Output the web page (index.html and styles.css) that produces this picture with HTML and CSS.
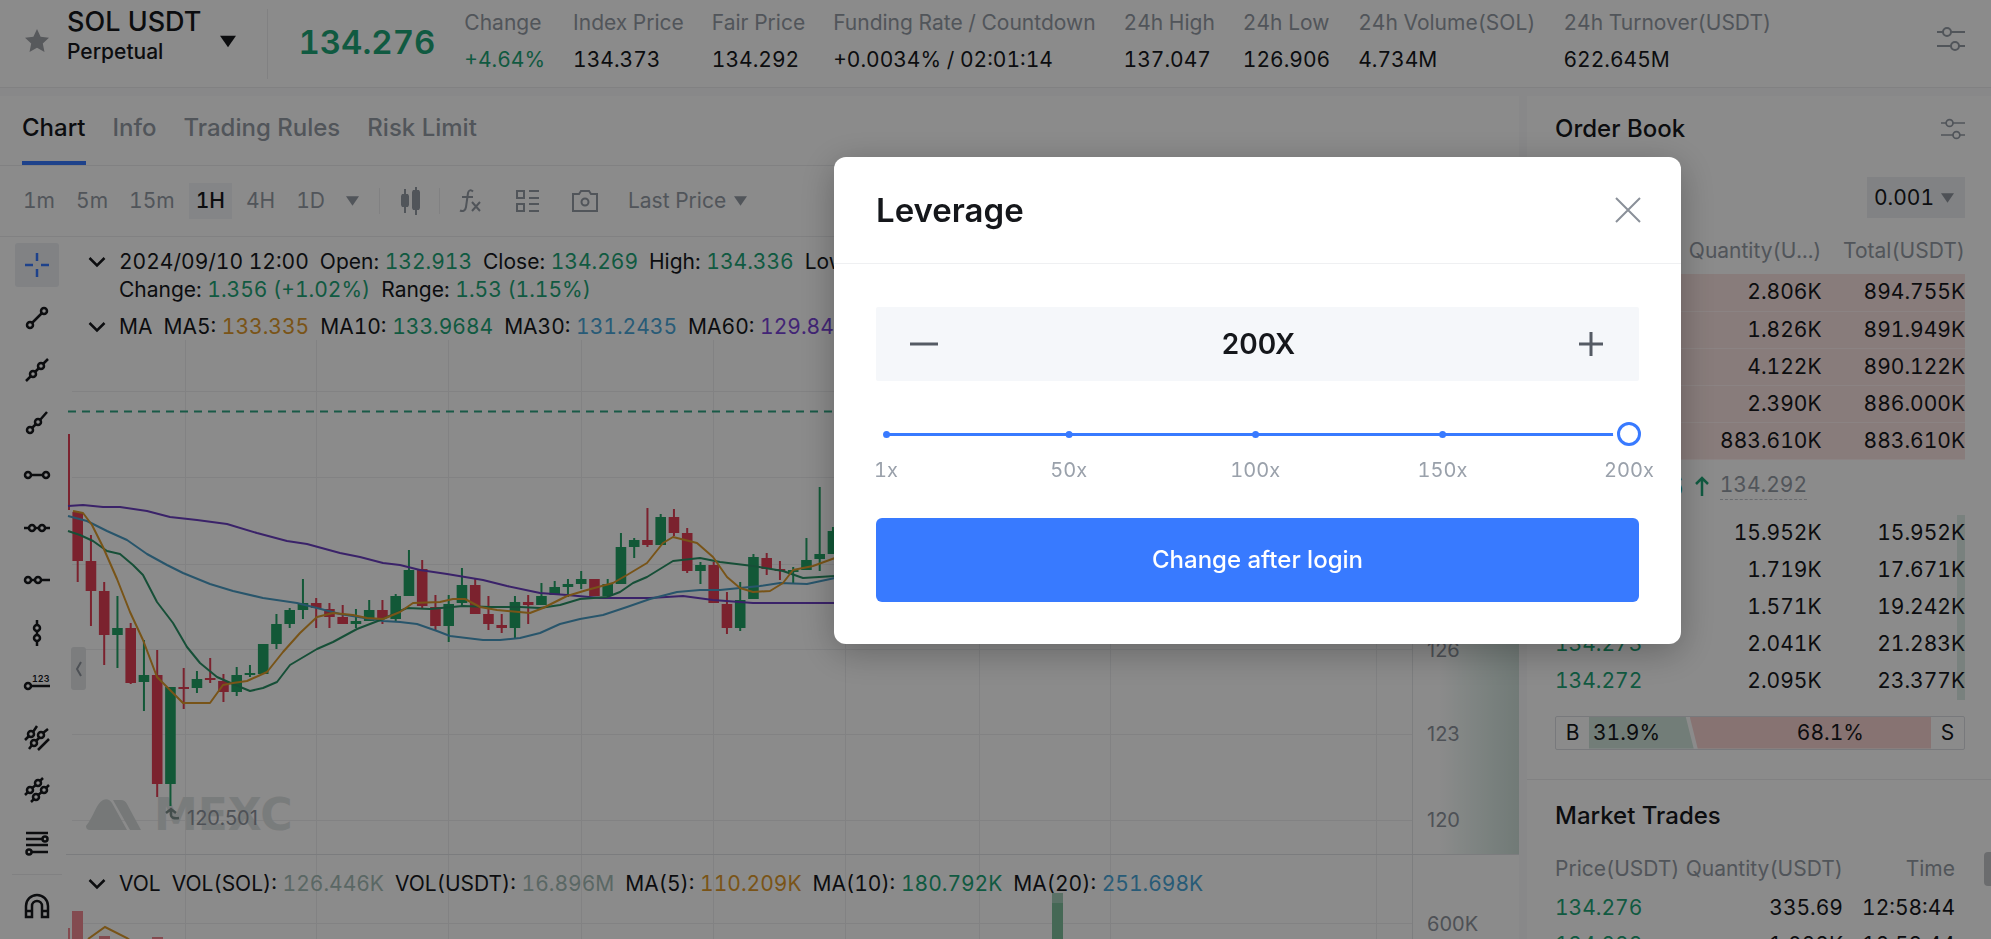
FILE: index.html
```html
<!DOCTYPE html>
<html lang="en">
<head>
<meta charset="utf-8">
<title>SOL USDT Perpetual</title>
<link rel="stylesheet" href="styles.css">
</head>
<body>
<svg class="defs" aria-hidden="true">
  <symbol id="i-filter" viewBox="0 0 28 28"><g fill="none" stroke="currentColor" stroke-width="2"><circle cx="10" cy="7" r="4"/><path d="M0 7h6M14 7h14"/><circle cx="18" cy="21" r="4"/><path d="M0 21h14M22 21h6"/></g></symbol>
  <symbol id="i-chev" viewBox="0 0 18 12"><path d="M1.500 2l7.500 7.500L16.500 2" fill="none" stroke="currentColor" stroke-width="2.500"/></symbol>
  <symbol id="i-caret" viewBox="0 0 14 10"><path d="M0 0h14L7 10z" fill="currentColor"/></symbol>
</svg>

<header class="ticker">
  <svg class="star" viewBox="0 0 24 24" aria-hidden="true"><path d="M12 0l3.600 7.700 8.400 1-6.200 5.800 1.700 8.500-7.500-4.200L4.500 23l1.700-8.500L0 8.700l8.400-1z" fill="currentColor"/></svg>
  <button class="pair">
    <span class="pair-text"><span class="pair-name">SOL USDT</span><span class="pair-kind">Perpetual</span></span>
    <svg class="pair-caret"><use href="#i-caret"/></svg>
  </button>
  <strong class="last-price">134.276</strong>
  <dl class="stats">
    <div><dt>Change</dt><dd class="up">+4.64%</dd></div>
    <div><dt>Index Price</dt><dd>134.373</dd></div>
    <div><dt>Fair Price</dt><dd>134.292</dd></div>
    <div><dt>Funding Rate / Countdown</dt><dd>+0.0034% / 02:01:14</dd></div>
    <div><dt>24h High</dt><dd>137.047</dd></div>
    <div><dt>24h Low</dt><dd>126.906</dd></div>
    <div><dt>24h Volume(SOL)</dt><dd>4.734M</dd></div>
    <div><dt>24h Turnover(USDT)</dt><dd>622.645M</dd></div>
  </dl>
  <button class="icon-btn ticker-settings" aria-label="Ticker settings"><svg width="28" height="28"><use href="#i-filter"/></svg></button>
</header>

<main class="workspace">
  <section class="chart-panel">
    <nav class="tabs">
      <a class="tab active" href="#chart">Chart</a>
      <a class="tab" href="#info">Info</a>
      <a class="tab" href="#rules">Trading Rules</a>
      <a class="tab" href="#risk">Risk Limit</a>
    </nav>
    <div class="toolbar">
      <div class="frames">
        <button>1m</button><button>5m</button><button>15m</button><button class="active">1H</button><button>4H</button><button>1D</button>
        <button class="more" aria-label="More intervals"><svg class="caret"><use href="#i-caret"/></svg></button>
      </div>
      <button class="tool sep" aria-label="Chart type"><svg width="24" height="28" viewBox="0 0 24 28" fill="currentColor"><path d="M5 2h2v5h2l1 2v9l-1 2H7v6H5v-6H3l-1-2V9l1-2h2zM16 0h2v3h2l1 2v16l-1 2h-2v5h-2v-5h-2l-1-2V5l1-2h2z"/></svg></button>
      <button class="tool sep" aria-label="Indicators"><svg width="24" height="26" viewBox="0 0 24 26" fill="none" stroke="currentColor" stroke-width="2"><path d="M14 3.500C12 1.500 9.500 2 9 5L7 19c-.5 3.500-3 5-6 3.500M3 9h11M13 14l8 9M21 14l-8 9"/></svg></button>
      <button class="tool" aria-label="Layout"><svg width="24" height="24" viewBox="0 0 24 24" fill="none" stroke="currentColor" stroke-width="2"><path d="M2 2h7v7H2zM2 15h7v7H2zM14 2h10M14 9h10M14 15h10M14 22h10"/></svg></button>
      <button class="tool" aria-label="Screenshot"><svg width="28" height="24" viewBox="0 0 28 24" fill="none" stroke="currentColor" stroke-width="2"><path d="M2 5h6l2-3h8l2 3h6v17H2z"/><circle cx="14" cy="13" r="3.500"/></svg></button>
      <button class="price-kind">Last Price <svg class="caret"><use href="#i-caret"/></svg></button>
    </div>
    <div class="chart-body">
      <div class="draw-tools">
        <div class="draw-list">
          <button class="active" aria-label="Crosshair"><svg viewBox="0 0 28 28"><path d="M14 2v8M14 18v8M2 14h8M18 14h8"/></svg></button>
          <button aria-label="Segment"><svg viewBox="0 0 28 28"><path d="M9 19L19 9"/><circle cx="7" cy="21" r="3"/><circle cx="21" cy="7" r="3"/></svg></button>
          <button aria-label="Line"><svg viewBox="0 0 28 28"><path d="M3 25l5-5M12 16l4-4M20 8l5-5"/><circle cx="10" cy="18" r="3"/><circle cx="18" cy="10" r="3"/></svg></button>
          <button aria-label="Ray"><svg viewBox="0 0 28 28"><path d="M9 19l4-4M17 11l7-8"/><circle cx="7" cy="21" r="3"/><circle cx="15" cy="13" r="3"/></svg></button>
          <button aria-label="Horizontal segment"><svg viewBox="0 0 28 28"><path d="M8 14h12"/><circle cx="5" cy="14" r="3"/><circle cx="23" cy="14" r="3"/></svg></button>
          <button aria-label="Horizontal line"><svg viewBox="0 0 28 28"><path d="M1 14h5M12 14h4M22 14h5"/><circle cx="9" cy="14" r="3"/><circle cx="19" cy="14" r="3"/></svg></button>
          <button aria-label="Horizontal ray"><svg viewBox="0 0 28 28"><path d="M8 14h4M18 14h9"/><circle cx="5" cy="14" r="3"/><circle cx="15" cy="14" r="3"/></svg></button>
          <button aria-label="Vertical line"><svg viewBox="0 0 28 28"><path d="M14 1v5M14 12v4M14 22v5"/><circle cx="14" cy="9" r="3"/><circle cx="14" cy="19" r="3"/></svg></button>
          <button aria-label="Price line"><svg viewBox="0 0 28 28"><path d="M8 15h19"/><circle cx="5" cy="15" r="3"/><text x="9" y="11">123</text></svg></button>
          <button aria-label="Parallel lines"><svg viewBox="0 0 28 28"><path d="M2 16l4-4M10 8l4-6M6 25l3-4M13 17l4-4M20 9l5-4M15 26l11-11"/><circle cx="8" cy="10" r="3"/><circle cx="18" cy="11" r="3"/><circle cx="11" cy="19" r="3"/></svg></button>
          <button aria-label="Channel"><svg viewBox="0 0 28 28"><path d="M2 19l3-3M9 12l4-3M17 5l3-3M8 26l3-3M15 19l4-3M23 12l3-3"/><circle cx="7" cy="14" r="3"/><circle cx="15" cy="7" r="3"/><circle cx="13" cy="21" r="3"/><circle cx="21" cy="14" r="3"/></svg></button>
          <button aria-label="Levels"><svg viewBox="0 0 28 28"><path d="M3 4h22M3 10h16M3 16h22M9 23h16"/><circle cx="22" cy="10" r="2.500"/><circle cx="6" cy="23" r="2.500"/></svg></button>
        </div>
        <button class="magnet" aria-label="Magnet"><svg viewBox="0 0 28 28"><path d="M3 25V14a11 11 0 0 1 22 0v11h-6V14a5 5 0 0 0-10 0v11zM3 19h6M19 19h6"/></svg></button>
      </div>
      <div class="plot">
        <svg class="plot-svg" id="plot" viewBox="66 237 1453 702" preserveAspectRatio="xMinYMin slice" role="img" aria-label="SOL USDT one hour candles"></svg>
        <div class="legend">
          <div class="legend-row">
            <svg class="chev"><use href="#i-chev"/></svg>
            <p><span>2024/09/10 12:00</span> <span>Open: <b class="up">132.913</b></span> <span>Close: <b class="up">134.269</b></span> <span>High: <b class="up">134.336</b></span> <span>Low: <b class="up">132.806</b></span></p>
            <p class="second"><span>Change: <b class="up">1.356 (+1.02%)</b></span> <span>Range: <b class="up">1.53 (1.15%)</b></span></p>
          </div>
          <div class="legend-row">
            <svg class="chev"><use href="#i-chev"/></svg>
            <p><span>MA</span> <span>MA5: <b class="c-orange">133.335</b></span> <span>MA10: <b class="up">133.9684</b></span> <span>MA30: <b class="c-blue">131.2435</b></span> <span>MA60: <b class="c-purple">129.8423</b></span></p>
          </div>
        </div>
        <div class="legend vol">
          <div class="legend-row">
            <svg class="chev"><use href="#i-chev"/></svg>
            <p><span>VOL</span> <span>VOL(SOL): <b class="c-mist">126.446K</b></span> <span>VOL(USDT): <b class="c-mist">16.896M</b></span> <span>MA(5): <b class="c-orange">110.209K</b></span> <span>MA(10): <b class="up">180.792K</b></span> <span>MA(20): <b class="c-blue">251.698K</b></span></p>
          </div>
        </div>
        <button class="collapse" aria-label="Hide drawing tools"><svg width="8" height="16" viewBox="0 0 8 16"><path d="M6 1L2 8l4 7" fill="none" stroke="currentColor" stroke-width="2"/></svg></button>
      </div>
    </div>
  </section>

  <aside class="side">
    <section class="book">
      <div class="side-head"><h2>Order Book</h2><button class="icon-btn" aria-label="Order book settings"><svg width="24" height="24"><use href="#i-filter"/></svg></button></div>
      <div class="precision"><label class="select-wrap"><select aria-label="Price precision"><option>0.001</option></select><svg class="caret"><use href="#i-caret"/></svg></label></div>
      <table class="orders">
        <thead><tr><th>Price</th><th>Quantity(U...)</th><th>Total(USDT)</th></tr></thead>
        <tbody class="asks">
          <tr><td>134.281</td><td>2.806K</td><td>894.755K</td></tr>
          <tr><td>134.280</td><td>1.826K</td><td>891.949K</td></tr>
          <tr><td>134.279</td><td>4.122K</td><td>890.122K</td></tr>
          <tr><td>134.278</td><td>2.390K</td><td>886.000K</td></tr>
          <tr><td>134.277</td><td>883.610K</td><td>883.610K</td></tr>
        </tbody>
      </table>
      <div class="mid"><strong>134.276</strong><svg width="14" height="20" viewBox="0 0 14 20"><path d="M7 20V2M1 8l6-6 6 6" fill="none" stroke="currentColor" stroke-width="2.500"/></svg><a href="#fair">134.292</a></div>
      <table class="orders">
        <tbody class="bids">
          <tr><td>134.276</td><td>15.952K</td><td>15.952K</td></tr>
          <tr><td>134.275</td><td>1.719K</td><td>17.671K</td></tr>
          <tr><td>134.274</td><td>1.571K</td><td>19.242K</td></tr>
          <tr><td>134.273</td><td>2.041K</td><td>21.283K</td></tr>
          <tr><td>134.272</td><td>2.095K</td><td>23.377K</td></tr>
        </tbody>
      </table>
      <div class="ratio"><span class="tag">B</span><span class="buy">31.9%</span><span class="sell">68.1%</span><span class="tag">S</span></div>
    </section>
    <section class="trades">
      <h2>Market Trades</h2>
      <table>
        <thead><tr><th>Price(USDT)</th><th>Quantity(USDT)</th><th>Time</th></tr></thead>
        <tbody>
          <tr><td>134.276</td><td>335.69</td><td>12:58:44</td></tr>
          <tr><td>134.288</td><td>1.028K</td><td>12:58:44</td></tr>
        </tbody>
      </table>
      <div class="scroll-thumb"></div>
    </section>
  </aside>
</main>

<div class="overlay">
  <section class="dialog" role="dialog" aria-modal="true" aria-labelledby="dlg-title">
    <header class="dialog-head">
      <h1 id="dlg-title">Leverage</h1>
      <button class="close" aria-label="Close"><svg width="26" height="26" viewBox="0 0 26 26"><path d="M1 1l24 24M25 1L1 25" stroke="currentColor" stroke-width="2"/></svg></button>
    </header>
    <div class="dialog-body">
      <div class="stepper">
        <button aria-label="Decrease"><svg width="28" height="28" viewBox="0 0 28 28"><path d="M0 14h28" stroke="currentColor" stroke-width="3"/></svg></button>
        <input type="text" value="200X" aria-label="Leverage value">
        <button aria-label="Increase"><svg width="24" height="24" viewBox="0 0 24 24"><path d="M0 12h24M12 0v24" stroke="currentColor" stroke-width="3"/></svg></button>
      </div>
      <div class="slider">
        <input type="range" min="1" max="200" value="200" aria-label="Leverage">
        <div class="ticks">
          <span style="left:0%">1x</span>
          <span style="left:24.600%">50x</span>
          <span style="left:49.700%">100x</span>
          <span style="left:74.900%">150x</span>
          <span class="end" style="left:100%">200x</span>
        </div>
      </div>
      <button class="primary">Change after login</button>
    </div>
  </section>
</div>
<script src="chart.js"></script>
</body>
</html>
```

FILE: styles.css
```css
:root {
  --ink: #16181c;
  --muted: #959ca6;
  --line: #ecedef;
  --up: #1fa577;
  --blue: #387aff;
}
* { box-sizing: border-box; }
body {
  margin: 0;
  height: 100vh;
  display: flex;
  flex-direction: column;
  overflow: hidden;
  background: #fff;
  color: var(--ink);
  font: 21px/28px Inter, "Liberation Sans", sans-serif;
  font-variant-numeric: tabular-nums;
}
button, input, select { font: inherit; color: inherit; font-variant-numeric: inherit; }
button { border: 0; padding: 0; background: none; display: flex; align-items: center; }
a { color: inherit; text-decoration: none; }
h1, h2, p, dl, dd { margin: 0; }
b { font-weight: 400; }
svg { display: block; flex: none; }
.defs { position: absolute; width: 0; height: 0; }
.up { color: var(--up); }
.c-orange { color: #e09a2c; }
.c-blue { color: #4aa8da; }
.c-purple { color: #7a45d8; }
.c-mist { color: #a6bdb8; }
.caret { width: 13px; height: 10px; }
.icon-btn { color: var(--muted); }

.ticker {
  flex: none;
  display: flex;
  align-items: center;
  height: 88px;
  padding: 0 26px 0 25px;
  border-bottom: 1px solid var(--line);
}
.star { width: 24px; height: 24px; margin: 0 18px 6px 0; color: #a0a3a9; }
.pair { gap: 19px; padding-right: 31px; height: 70px; border-right: 1px solid var(--line); text-align: left; font-weight: 500; }
.pair-text { display: flex; flex-direction: column; margin-bottom: 16px; }
.pair-name { font-size: 27px; line-height: 32px; }
.pair-caret { width: 16px; height: 13px; margin-bottom: 4px; }
.last-price { margin: 0 29px 0 30px; padding-bottom: 3px; font-size: 33px; font-weight: 600; color: var(--up); }
.stats { display: flex; gap: 28px; flex: 1; padding-bottom: 6px; white-space: nowrap; }
.stats dt { color: var(--muted); line-height: 37px; }
.stats dd { line-height: 37px; }
.ticker-settings { margin-bottom: 10px; }

.workspace { flex: 1; min-height: 0; display: grid; grid-template-columns: minmax(0, 1fr) 464px; gap: 8px; padding-top: 8px; background: #fafafb; }
.chart-panel, .side { background: #fff; min-height: 0; overflow: hidden; }
.chart-panel { display: flex; flex-direction: column; }

.tabs { display: flex; flex: none; gap: 27px; height: 70px; padding: 0 22px; border-bottom: 1px solid var(--line); font-size: 24px; font-weight: 500; color: var(--muted); }
.tab { display: flex; align-items: center; padding-bottom: 2px; border-bottom: 4px solid transparent; }
.tab.active { color: var(--ink); border-color: var(--blue); }

.toolbar { display: flex; flex: none; align-items: center; height: 71px; padding-left: 16px; border-bottom: 1px solid var(--line); color: var(--muted); }
.frames { display: flex; gap: 7px; }
.frames button { padding: 4px 7px; }
.frames .active { background: #f3f5f7; color: var(--ink); font-weight: 500; }
.frames .more { padding: 4px 20px 4px 7px; }
.tool { justify-content: center; padding: 0 16px; height: 26px; }
.tool.sep { padding-left: 19px; border-left: 1px solid var(--line); }
.price-kind { gap: 8px; padding-left: 13px; }

.chart-body { flex: 1; min-height: 0; display: flex; }
.draw-tools { flex: none; width: 66px; padding: 6px 4px 0 12px; }
.draw-list { display: flex; flex-direction: column; align-items: center; justify-content: space-between; height: 632px; padding-bottom: 9px; border-bottom: 1px solid var(--line); }
.draw-tools button { flex: none; justify-content: center; width: 44px; height: 44px; border-radius: 3px; }
.draw-tools .active { background: #eceff3; color: var(--blue); }
.draw-tools svg { width: 28px; height: 28px; fill: none; stroke: currentColor; stroke-width: 2.500; }
.draw-tools text { fill: currentColor; stroke: none; font-size: 9px; font-weight: 600; }
.draw-tools .magnet { margin: 9px auto 0; }

.plot { position: relative; flex: 1; min-width: 0; overflow: hidden; }
.plot-svg { width: 100%; height: 100%; font-variant-numeric: normal; }
.plot-svg text { fill: #8f959e; font-size: 20px; }
.plot-svg .brand { fill: #dfe3e3; font: bold 44px "DejaVu Sans", sans-serif; }
.legend { position: absolute; top: 11px; left: 22px; display: grid; gap: 9px; white-space: nowrap; }
.legend.vol { top: 633px; }
.legend-row { display: grid; grid-template-columns: 18px auto; column-gap: 13px; align-items: center; }
.legend p { display: flex; gap: 11px; }
.legend .second { grid-column: 2; }
.chev { width: 18px; height: 12px; }
.collapse { position: absolute; top: 410px; left: 5px; width: 15px; height: 43px; justify-content: center; background: #e3e6e8; border-radius: 3px; color: #8f959e; }

.side { display: flex; flex-direction: column; }
.book { flex: none; padding: 0 26px 29px 28px; border-bottom: 1px solid var(--line); }
h2 { font-size: 24px; font-weight: 500; }
.side-head { display: flex; align-items: center; justify-content: space-between; height: 66px; }
.precision { display: flex; justify-content: flex-end; padding-top: 15px; }
.select-wrap { display: flex; align-items: center; justify-content: space-between; width: 98px; height: 41px; padding: 0 11px 0 7px; background: #eceff2; }
.select-wrap select { appearance: none; width: 66px; border: 0; padding: 0; background: none; }
.select-wrap .caret { color: #8f959e; }
table { width: 100%; border-collapse: collapse; table-layout: fixed; }
th { font-weight: 400; color: var(--muted); }
th, td { padding: 0; height: 37px; text-align: right; white-space: nowrap; }
th:first-child, td:first-child { text-align: left; }
.orders th { height: 56px; padding-top: 10px; }
.orders th:nth-child(n+2), .orders td:nth-child(n+2) { width: 35%; }
.asks tr { background: #fae4e2; border-bottom: 1px solid #fff1f0; }
.asks td:first-child { color: #e2465a; }
.bids td:first-child, .trades td:first-child { color: var(--up); }
.bids tr { background: linear-gradient(to left, #dfece8 8px, transparent 8px); }
.mid { display: flex; align-items: center; gap: 11px; height: 55px; padding-bottom: 3px; color: var(--up); }
.mid strong { font-size: 31px; font-weight: 600; }
.mid a { color: var(--muted); border-bottom: 1px dashed #c3c7ce; }
.ratio { display: flex; height: 34px; margin-top: 16px; border: 1px solid #dcdfe3; border-radius: 2px; line-height: 32px; }
.ratio .tag { width: 33px; text-align: center; }
.ratio .buy { flex: 32; padding-left: 4px; background: #d2e6dd; clip-path: polygon(0 0, calc(100% - 8px) 0, 100% 100%, 0 100%); }
.ratio .sell { flex: 64; margin-left: -4px; text-align: center; padding-left: 40px; background: #f8d3d1; clip-path: polygon(0 0, 100% 0, 100% 100%, 8px 100%); }
.trades { position: relative; flex: 1; padding: 22px 36px 0 28px; }
.trades th { height: 60px; padding-top: 18px; }
.trades h2 { line-height: 28px; }
.trades th:nth-child(2), .trades td:nth-child(2) { width: 41%; }
.trades th:nth-child(3), .trades td:nth-child(3) { width: 28%; }
.scroll-thumb { position: absolute; right: 0; top: 72px; width: 7px; height: 34px; border-radius: 4px 0 0 4px; background: #c5c7ca; }

.overlay { position: fixed; inset: 0; display: flex; align-items: flex-start; justify-content: flex-end; padding: 157px 310px 0 0; background: rgba(0, 0, 0, .455); }
.dialog { width: 847px; background: #fff; border-radius: 12px; box-shadow: 0 8px 36px rgba(0, 0, 0, .28); color: #15171b; }
.dialog-head { display: flex; align-items: center; justify-content: space-between; height: 107px; padding: 0 40px 0 42px; border-bottom: 1px solid #eff0f2; }
h1 { font-size: 33px; line-height: 40px; font-weight: 600; }
.close { color: #8a9099; }
.dialog-body { padding: 43px 42px 42px; }
.stepper { display: flex; align-items: center; justify-content: space-between; height: 74px; padding: 0 36px 0 34px; background: #f5f7fa; border-radius: 2px; color: #555b64; }
.stepper input { flex: 1; min-width: 0; border: 0; background: none; text-align: center; font-size: 28px; font-weight: 600; color: #15171b; font-variant-numeric: normal; }
.slider { position: relative; margin: 41px 10px 22px; }
.slider input { appearance: none; display: block; width: calc(100% + 24px); height: 24px; margin: 0 -12px; background: none; }
.slider input::-webkit-slider-runnable-track { height: 3px; margin: 0 12px; background: var(--blue); }
.slider input::-webkit-slider-thumb { appearance: none; width: 24px; height: 24px; margin-top: -11px; border: 3px solid var(--blue); border-radius: 50%; background: #fff; box-shadow: 0 0 0 4px #fff; transform: translateX(12px); }
.ticks { position: relative; height: 40px; margin-top: 10px; color: #9aa1ab; line-height: 28px; font-size: 20px; }
.ticks span { position: absolute; top: 0; transform: translateX(-50%); }
.ticks span::before { content: ""; position: absolute; left: 50%; top: -25px; width: 7px; height: 7px; margin-left: -3px; border-radius: 50%; background: var(--blue); }
.ticks .end::before { display: none; }
.primary { width: 100%; height: 84px; justify-content: center; border-radius: 6px; background: var(--blue); color: #fff; font-size: 24px; font-weight: 500; }
```

FILE: chart.js
```js
const RED = '#e23f55', GREEN = '#22a266';
// [direction, body top, body bottom, high, low]
const candles = [
  ['r',512,561,511,582],['r',561,591,535,626],['r',591,635,582,665],['g',628,635,596,668],['r',628,683,623,684],
  ['g',675,682,640,711],['r',675,784,650,797],['g',687,784,687,806],['r',687,689,668,709],['g',679,688,671,693],
  ['r',678,680,658,683],['r',681,692,674,702],['g',675,692,667,696],['g',673,675,665,677],['g',644,674,644,674],
  ['g',624,644,614,649],['g',610,624,608,628],['g',603,610,579,619],['r',603,608,598,628],['r',609,617,603,628],
  ['r',617,624,605,624],['g',621,624,609,628],['g',610,621,600,621],['r',610,618,600,624],['g',596,619,594,622],
  ['g',570,596,550,596],['r',569,606,560,609],['r',607,626,595,631],['g',604,626,595,642],['g',585,603,568,607],
  ['r',585,614,579,614],['r',614,624,596,630],['r',625,628,614,633],['g',602,628,596,639],['r',602,605,595,624],
  ['g',596,605,583,605],['g',587,595,581,595],['g',584,587,579,597],['g',579,584,571,589],['r',579,596,579,596],
  ['g',584,596,579,596],['g',547,584,533,584],['g',540,547,538,558],['r',540,545,508,547],['g',517,545,514,545],
  ['r',517,533,509,536],['r',533,571,528,573],['g',565,571,562,584],['r',565,603,562,603],['r',604,628,592,634],
  ['g',600,628,582,631],['g',557,599,554,599],['r',558,569,553,575],['r',569,571,561,580],['g',570,572,567,584],
  ['g',560,570,538,570],['g',554,559,487,571],['g',531,554,527,554]
];
const lines = {
  '#6b3fc0': '68,506 83,505 103,507 120,507 147,511 170,517 197,520 227,524 257,533 287,541 307,544 340,553 360,557 383,563 400,565 420,570 447,574 483,580 507,586 540,593 567,595 600,598 650,598 683,596 713,600 753,603 835,603',
  '#4a9cc4': '68,516 87,521 107,531 127,540 147,554 167,565 183,573 210,584 233,591 263,598 297,603 317,608 340,614 383,621 400,622 417,624 437,631 450,636 483,640 500,640 520,638 540,633 560,624 580,619 603,615 627,607 650,599 677,592 700,590 720,590 760,586 780,583 807,584 835,578',
  '#2a9166': '68,531 80,535 93,541 107,551 120,554 133,565 143,575 157,602 173,623 187,647 200,663 217,677 233,684 250,691 263,688 277,682 290,665 317,649 333,642 357,629 383,619 400,611 407,608 430,609 463,606 490,607 520,607 540,608 560,605 580,599 607,597 620,592 633,583 647,577 673,561 700,558 720,562 753,566 783,571 803,578 835,576',
  '#dd9a2c': '73,511 83,513 92,525 103,547 117,579 130,612 143,640 157,677 170,690 183,703 210,703 223,685 233,683 247,681 267,672 283,652 300,633 317,617 333,613 353,615 367,618 383,619 400,612 413,603 440,602 453,599 465,599 480,607 497,610 530,613 543,608 567,596 587,590 613,583 627,575 647,563 663,543 673,537 697,543 713,557 727,577 740,588 753,592 770,591 783,583 793,570 813,566 835,558'
};
let out = '<defs><linearGradient id="depth"><stop offset="0" stop-color="#b9dccf" stop-opacity="0"/><stop offset="1" stop-color="#c4d8d1" stop-opacity=".8"/></linearGradient></defs>';
const rect = (x, y, w, h, f) => `<rect x="${x}" y="${y}" width="${w}" height="${h}" fill="${f}"/>`;
[185, 316, 448, 581, 713, 845, 979, 1110, 1376].forEach(x => out += rect(x, 340, 1, 600, '#eeeff1'));
[391, 477, 564, 649, 734, 820, 923].forEach(y => out += rect(72, y, 1340, 1, '#eeeff1'));
out += rect(1412, 237, 1, 702, '#e6e8ea') + rect(66, 854, 1453, 1, '#e2e4e7') + rect(1440, 237, 79, 617, 'url(#depth)');
// brand mark under the candles
out += '<g fill="#d8dddd"><path d="M86 826c8-10 10-22 17-26 4-2 7 0 9 3l15 27H90q-4 0-4-4zM113 800h8q4 0 6 4l14 26h-11z"/></g><text class="brand" x="154" y="830">MEXC</text>';
out += '<path d="M68 411.500H835" stroke="#2fa583" stroke-width="2" stroke-dasharray="8 6"/>';
out += rect(68, 434, 2, 76, RED);
candles.forEach(([d, t, b, h, l], i) => {
  const x = 77.7 + 13.25 * i, f = d === 'r' ? RED : GREEN;
  out += rect(x - 1, h, 2, l - h, f) + rect(x - 5.3, t, 10.6, b - t, f);
});
for (const c in lines) out += `<polyline points="${lines[c]}" fill="none" stroke="${c}" stroke-width="2" stroke-linejoin="round"/>`;
out += '<path d="M166 813l5-4 5 4M171 810v5q0 4 8 3" fill="none" stroke="#7d8f8b" stroke-width="2.500"/><text x="187" y="825">120.501</text>';
out += '<text x="1427" y="657">126</text><text x="1427" y="741">123</text><text x="1427" y="827">120</text><text x="1427" y="931">600K</text>';
out += rect(72, 911, 11, 28, '#f08a94') + rect(99, 936, 11, 3, '#f08a94') + rect(152, 937, 11, 2, '#f08a94') + rect(68, 928, 2, 11, '#f08a94');
out += rect(1052, 893, 11, 10, '#a5d0bb') + rect(1052, 903, 11, 36, '#7fbf9c');
out += '<polyline points="88,939 105,927 127,938 131,941" fill="none" stroke="#dd9a2c" stroke-width="2"/>';
document.getElementById('plot').innerHTML = out;
```
